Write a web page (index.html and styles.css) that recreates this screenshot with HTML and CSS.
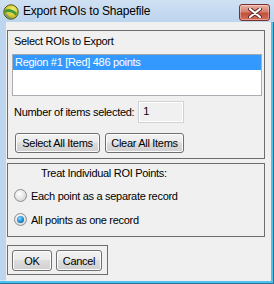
FILE: index.html
```html
<!DOCTYPE html>
<html lang="en">
<head>
    <meta charset="UTF-8">
    <title>Export ROIs to Shapefile</title>
    <link rel="stylesheet" href="styles.css">
</head>
<body>
    <div class="window">
        <!-- Title bar -->
        <div class="titlebar">
            <svg class="app-icon" width="16" height="16" viewBox="0 0 16 16">
                <defs>
                    <radialGradient id="globe" cx="0.6" cy="0.35" r="0.7">
                        <stop offset="0" stop-color="#f4f27a"/>
                        <stop offset="0.6" stop-color="#d8c72e"/>
                        <stop offset="1" stop-color="#8a9a2a"/>
                    </radialGradient>
                </defs>
                <circle cx="8" cy="8" r="7.2" fill="url(#globe)" stroke="#4d5a1c" stroke-width="1"/>
                <path d="M2 6 C5 4 10 5 14 9 L13 12 C10 8 5 7 1.5 9 Z" fill="#3f9a3a"/>
                <path d="M2.5 10.5 C4 13 7 14.5 9.5 14.7 C6 13 4 11.5 3 9.5 Z" fill="#5a86b8"/>
            </svg>
            <span class="title">Export ROIs to Shapefile</span>
            <div class="close-btn">
                <svg width="14" height="10" viewBox="0 0 14 10">
                    <path d="M2 1 L12 9 M12 1 L2 9" stroke="#5a2a26" stroke-width="4" stroke-linecap="round"/>
                    <path d="M2 1 L12 9 M12 1 L2 9" stroke="#ffffff" stroke-width="2.2" stroke-linecap="round"/>
                </svg>
            </div>
        </div>

        <div class="client">
            <!-- ROI list -->
            <div class="panel panel-select">
                <div class="caption">Select ROIs to Export</div>
                <div class="listbox">
                    <div class="list-item selected">Region #1 [Red] 486 points</div>
                </div>
                <div class="count-row">
                    <span>Number of items selected:</span>
                    <div class="count-box">1</div>
                </div>
                <div class="button-row">
                    <button class="win-button btn-select">Select All Items</button>
                    <button class="win-button btn-clear">Clear All Items</button>
                </div>
            </div>

            <!-- Point options -->
            <div class="panel panel-points">
                <div class="caption caption-center">Treat Individual ROI Points:</div>
                <label class="radio"><span class="radio-dot"></span>Each point as a separate record</label>
                <label class="radio"><span class="radio-dot checked"></span>All points as one record</label>
            </div>

            <!-- Dialog buttons -->
            <div class="panel panel-ok">
                <button class="win-button btn-ok">OK</button>
                <button class="win-button btn-cancel">Cancel</button>
            </div>
        </div>
    </div>
</body>
</html>
```

FILE: styles.css
```css
/* Page */
body {
    margin: 0;
    font-family: "Liberation Sans", Arial, sans-serif;
    font-size: 11px;
    letter-spacing: -0.3px;
    color: #000;
}

/* Window frame */
.window {
    width: 274px;
    height: 284px;
    box-sizing: border-box;
    display: flex;
    flex-direction: column;
    background: #bdd5ee;
    box-shadow: inset -1px -1px 0 #2b6f9c, inset -3px -3px 0 #4ec1ef, inset -4px -4px 0 #cfe7f7;
}
.titlebar {
    height: 22px;
    display: flex;
    align-items: flex-start;
    background: linear-gradient(#cfe0f2, #bdd5ee);
}
.app-icon {
    margin: 4px 0 0 3px;
}
.title {
    margin: 4px 0 0 4px;
    font-size: 12px;
    line-height: 15px;
    letter-spacing: -0.2px;
    flex: 1;
}
.close-btn {
    width: 29px;
    height: 15px;
    margin: 4px 4px 0 0;
    border: 1px solid #7b2f29;
    border-radius: 3px;
    background: linear-gradient(#e9b2a6, #d4806e 45%, #c4503c 55%, #d0705c);
    box-shadow: inset 0 0 0 1px rgba(255, 255, 255, 0.35);
    display: flex;
    align-items: center;
    justify-content: center;
}

/* Client area */
.client {
    flex: 1;
    margin: 0 3px 3px 6px;
    padding: 8px 0 0 1px;
    background: #f0f0f0;
    display: flex;
    flex-direction: column;
    align-items: flex-start;
}
.panel {
    border: 1px solid #6d6d6d;
    box-sizing: border-box;
    display: flex;
    flex-direction: column;
}
.panel-select {
    width: 258px;
    height: 129px;
    padding: 4px 3px 0 4px;
}
.panel-points {
    width: 258px;
    height: 74px;
    margin-top: 4px;
    padding: 3px 0 0 6px;
}
.panel-ok {
    width: 101px;
    height: 30px;
    margin-top: 8px;
    padding: 4px 0 0 4px;
    flex-direction: row;
    gap: 4px;
}
.caption {
    line-height: 13px;
    padding-left: 2px;
}
.caption-center {
    padding-left: 27px;
}

/* List box */
.listbox {
    margin-top: 6px;
    width: 250px;
    height: 42px;
    box-sizing: border-box;
    border: 1px solid #abadb3;
    border-top-color: #a4a8ae;
    background: #fff;
}
.list-item {
    height: 15px;
    line-height: 15px;
    padding-left: 2px;
}
.list-item.selected {
    background: #3399ff;
    color: #fff;
}

/* Count row */
.count-row {
    margin-top: 5px;
    display: flex;
    align-items: center;
    padding-left: 2px;
}
.count-box {
    margin-left: 4px;
    width: 46px;
    height: 22px;
    box-sizing: border-box;
    border: 1px solid #cfd1d6;
    background: #f0f0f0;
    box-shadow: inset 0 0 0 1px #fff;
    padding: 3px 0 0 4px;
    line-height: 13px;
}

/* Buttons */
.button-row {
    margin-top: 10px;
    margin-left: 3px;
    display: flex;
    gap: 5px;
}
.win-button {
    font-family: inherit;
    font-size: 11px;
    letter-spacing: -0.3px;
    height: 20px;
    padding: 0;
    border: 1px solid #707070;
    border-radius: 3px;
    background: linear-gradient(#f2f2f2, #ebebeb 45%, #dddddd 50%, #cfcfcf);
    box-shadow: inset 0 0 0 1px #fcfcfc;
    color: #000;
}
.btn-select { width: 85px; }
.btn-clear { width: 79px; }
.btn-ok { width: 40px; height: 21px; }
.btn-cancel { width: 46px; height: 21px; }

/* Radio buttons */
.radio {
    display: flex;
    align-items: center;
    height: 13px;
    margin-top: 9px;
}
.radio + .radio {
    margin-top: 11px;
}
.radio-dot {
    width: 13px;
    height: 13px;
    box-sizing: border-box;
    border-radius: 50%;
    border: 1px solid #8e8f8f;
    background: radial-gradient(circle at 40% 35%, #ffffff, #e6e6e6 50%, #c9c9c9);
    margin-right: 4px;
    position: relative;
}
.radio-dot.checked::after {
    content: "";
    position: absolute;
    left: 2px;
    top: 2px;
    width: 7px;
    height: 7px;
    border-radius: 50%;
    background: radial-gradient(circle at 40% 35%, #8ad8ff, #1a8ad0 55%, #0c4f8a);
}
```
